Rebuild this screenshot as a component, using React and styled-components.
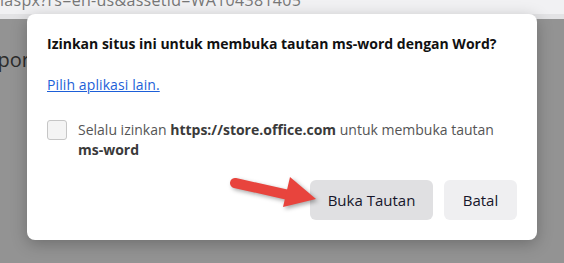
import React from "react";
import styled, { createGlobalStyle } from "styled-components";

const GlobalStyle = createGlobalStyle`
  html, body {
    margin: 0;
    padding: 0;
    width: 564px;
    height: 263px;
    overflow: hidden;
    background: #939393;
    font-family: "Open Sans", "Noto Sans", sans-serif;
  }
`;

const Page = styled.div`
  position: relative;
  width: 564px;
  height: 263px;
  display: flex;
  flex-direction: column;
  overflow: hidden;
`;

const AddressBar = styled.div`
  height: 14px;
  background: #f1f1f3;
  border-bottom: 5px solid #e3e3e5;
  overflow: hidden;
`;

const AddressText = styled.div`
  margin-top: -10px;
  font-size: 16px;
  line-height: 20px;
  color: #777;
  white-space: nowrap;
  letter-spacing: 0.3px;
`;

const Backdrop = styled.div`
  flex: 1;
  background: #939393;
  padding-top: 27px;
`;

const BehindText = styled.div`
  font-size: 20px;
  color: #2c2c2c;
  margin-left: -12px;
`;

const Dialog = styled.div`
  position: absolute;
  left: 27px;
  top: 14px;
  width: 510px;
  height: 226px;
  box-sizing: border-box;
  padding: 20px;
  background: #fff;
  border-radius: 8px;
  box-shadow: 0 4px 16px rgba(0, 0, 0, 0.25);
  display: flex;
  flex-direction: column;
`;

const Title = styled.div`
  font-size: 14px;
  font-weight: 700;
  line-height: 20px;
  color: #111;
`;

const ChooseLink = styled.a`
  margin-top: 21px;
  align-self: flex-start;
  font-size: 14px;
  line-height: 20px;
  color: #1d5fd8;
  text-decoration: underline;
  letter-spacing: 0.1px;
  cursor: pointer;
`;

const CheckRow = styled.label`
  margin-top: 25px;
  display: flex;
  gap: 11px;
  align-items: flex-start;
`;

const Box = styled.span`
  flex: none;
  width: 18px;
  height: 18px;
  border: 1px solid #c6c6c6;
  border-radius: 3px;
  background: #f4f4f4;
`;

const CheckText = styled.span`
  font-size: 14px;
  line-height: 20px;
  color: #555;

  b {
    color: #3a3a3a;
    font-weight: 700;
  }
`;

const Actions = styled.div`
  margin-top: auto;
  display: flex;
  justify-content: flex-end;
  gap: 11px;
`;

const Button = styled.button`
  height: 40px;
  width: ${({ $w }) => $w}px;
  border: none;
  border-radius: 6px;
  background: ${({ $primary }) => ($primary ? "#e0e0e2" : "#efeff1")};
  color: #16162a;
  font-family: "Open Sans", "Noto Sans", sans-serif;
  font-size: 15px;
  cursor: pointer;
`;

const Arrow = styled.svg`
  position: absolute;
  left: 0;
  top: 0;
  filter: drop-shadow(2px 2px 2px rgba(0, 0, 0, 0.35));
  pointer-events: none;
`;

export default function App() {
  return (
    <>
      <GlobalStyle />
      <Page>
        <AddressBar>
          <AddressText>iaspx?rs=en-us&amp;assetid=WA104381405</AddressText>
        </AddressBar>
        <Backdrop>
          <BehindText>spor</BehindText>
        </Backdrop>

        <Dialog>
          <Title>Izinkan situs ini untuk membuka tautan ms-word dengan Word?</Title>
          <ChooseLink>Pilih aplikasi lain.</ChooseLink>
          <CheckRow>
            <Box />
            <CheckText>
              Selalu izinkan <b>https://store.office.com</b> untuk membuka tautan
              <br />
              <b>ms-word</b>
            </CheckText>
          </CheckRow>
          <Actions>
            <Button $primary $w={123}>Buka Tautan</Button>
            <Button $w={73}>Batal</Button>
          </Actions>
        </Dialog>

        <Arrow width="564" height="263" viewBox="0 0 564 263">
          <line x1="235" y1="183" x2="293" y2="196" stroke="#e8443d" strokeWidth="10" strokeLinecap="round" />
          <polygon points="290,177 316,199 283,207" fill="#e8443d" />
        </Arrow>
      </Page>
    </>
  );
}
